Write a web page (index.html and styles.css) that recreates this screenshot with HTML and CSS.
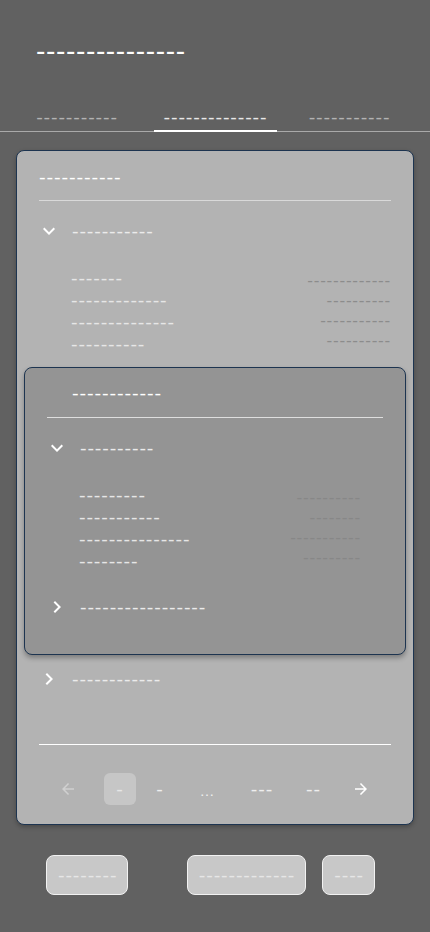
FILE: index.html
```html
<!DOCTYPE html>
<html lang="en">
<head>
  <meta charset="UTF-8">
  <meta name="viewport" content="width=device-width, initial-scale=1.0">
  <title>Report</title>
  <link rel="stylesheet" href="styles.css">
</head>
<body>
  <header class="pageHeader">
    <h1>---------------</h1>
  </header>

  <nav class="tabs">
    <div class="tab">-----------</div>
    <div class="tab active">--------------</div>
    <div class="tab">-----------</div>
  </nav>

  <section class="card">
    <h2 class="cardTitle">-----------</h2>
    <hr class="divider">

    <div class="accordions">
      <!-- expanded group -->
      <div class="accordion">
        <div class="summary">
          <svg class="chevron" viewBox="0 0 24 24"><path d="M16.59 8.59 12 13.17 7.41 8.59 6 10l6 6 6-6z"/></svg>
          <span>-----------</span>
        </div>
        <div class="details">
          <div class="kv">
            <div class="keys">
              <div>-------</div>
              <div>-------------</div>
              <div>--------------</div>
              <div>----------</div>
            </div>
            <div class="values">
              <div>-------------</div>
              <div>----------</div>
              <div>-----------</div>
              <div>----------</div>
            </div>
          </div>

          <section class="card inner">
            <h2 class="cardTitle">------------</h2>
            <hr class="divider">

            <div class="accordions">
              <div class="accordion">
                <div class="summary">
                  <svg class="chevron" viewBox="0 0 24 24"><path d="M16.59 8.59 12 13.17 7.41 8.59 6 10l6 6 6-6z"/></svg>
                  <span>----------</span>
                </div>
                <div class="details">
                  <div class="kv">
                    <div class="keys">
                      <div>---------</div>
                      <div>-----------</div>
                      <div>---------------</div>
                      <div>--------</div>
                    </div>
                    <div class="values">
                      <div>----------</div>
                      <div>--------</div>
                      <div>-----------</div>
                      <div>---------</div>
                    </div>
                  </div>
                </div>
              </div>
              <div class="accordion">
                <div class="summary">
                  <svg class="chevron" viewBox="0 0 24 24"><path d="M10 6 8.59 7.41 13.17 12l-4.58 4.59L10 18l6-6z"/></svg>
                  <span>-----------------</span>
                </div>
              </div>
            </div>
          </section>
        </div>
      </div>

      <div class="accordion">
        <div class="summary">
          <svg class="chevron" viewBox="0 0 24 24"><path d="M10 6 8.59 7.41 13.17 12l-4.58 4.59L10 18l6-6z"/></svg>
          <span>------------</span>
        </div>
      </div>
    </div>

    <hr class="divider bright">

    <div class="pagination">
      <span class="page disabled">
        <svg class="arrow" viewBox="0 0 24 24"><path d="M20 11H7.83l5.59-5.59L12 4l-8 8 8 8 1.41-1.41L7.83 13H20v-2z"/></svg>
      </span>
      <span class="page selected">-</span>
      <span class="page">-</span>
      <span class="page ellipsis">…</span>
      <span class="page">---</span>
      <span class="page">--</span>
      <span class="page">
        <svg class="arrow" viewBox="0 0 24 24"><path d="M12 4l-1.41 1.41L16.17 11H4v2h12.17l-5.58 5.59L12 20l8-8z"/></svg>
      </span>
    </div>
  </section>

  <div class="actions">
    <button class="button">--------</button>
    <div class="actionGroup">
      <button class="button">-------------</button>
      <button class="button">----</button>
    </div>
  </div>
</body>
</html>
```

FILE: styles.css
```css
* {
  box-sizing: border-box;
}

body {
  margin: 0;
  background-color: #616161;
  color: white;
  font-family: "DejaVu Sans", sans-serif;
  font-size: 18.2px;
  letter-spacing: 0.86px;
}

.pageHeader {
  padding: 38px 36px 0;
}

.pageHeader h1 {
  margin: 0;
  font-size: 26px;
  line-height: 26px;
  letter-spacing: 0.6px;
  font-weight: normal;
}

/* Tabs row with underline */
.tabs {
  display: grid;
  grid-template-columns: 154px 123px 145px;
  margin-top: 42px;
  border-bottom: 1px solid #a9a9a9;
}

.tab {
  height: 25px;
  line-height: 22px;
  text-align: center;
  color: #b3b3b3;
}

.tab.active {
  color: #e8e8e8;
  box-shadow: 0 1px 0 #fff, inset 0 -1px 0 #fff;
}

/* Cards */
.card {
  margin: 18px 16px 0;
  padding-bottom: 19px;
  background-color: #b3b3b3;
  border: 1px solid #1d3450;
  border-radius: 8px;
  box-shadow: 0 2px 4px rgba(0, 0, 0, 0.25);
}

.card.inner {
  margin: 11px 7px 0;
  padding-bottom: 23px;
  background-color: #949494;
  box-shadow: 0 3px 5px rgba(0, 0, 0, 0.3);
}

.cardTitle {
  height: 22px;
  margin: 0;
  padding: 0 22px;
  margin-top: 16px;
  font-size: 18.4px;
  line-height: 20px;
  font-weight: normal;
}

.inner .cardTitle {
  margin-top: 15px;
  padding: 0 47px;
}

.divider {
  height: 0;
  margin: 11px 22px 0;
  border: 0;
  border-top: 1px solid #d9d9d9;
}

.inner .divider {
  margin-top: 12px;
  border-top-color: #dedede;
}

.divider.bright {
  margin-top: 41px;
  border-top-color: #fff;
}

/* Accordions */
.accordions {
  padding-top: 6px;
}

.summary {
  display: flex;
  align-items: center;
  gap: 11px;
  height: 48px;
  padding-left: 20px;
  color: #ebebeb;
}

.summary span {
  line-height: 20px;
}

.chevron {
  width: 24px;
  height: 24px;
  flex: none;
  fill: #fff;
}

.details {
  padding-top: 13px;
}

.inner .details {
  padding-bottom: 10px;
}

.kv {
  display: flex;
  justify-content: space-between;
  align-items: center;
  padding: 0 22px 0 54px;
}

.inner .kv {
  padding-right: 44px;
}

.keys div {
  height: 22px;
  line-height: 20px;
  color: #e6e6e6;
}

.values div {
  height: 20px;
  line-height: 18px;
  font-size: 15.8px;
  letter-spacing: 0.74px;
  text-align: right;
  color: #8c8c8c;
}

.inner .values div {
  color: #878787;
}

/* Pagination */
.pagination {
  display: grid;
  grid-template-columns: 60px 32px 36px 46px 52px 39px 44px;
  column-gap: 6px;
  align-items: center;
  justify-items: center;
  height: 32px;
  margin-top: 28px;
  padding-left: 21px;
  color: #eeeeee;
}

.page {
  display: flex;
  align-items: center;
  justify-content: center;
  height: 32px;
  line-height: 30px;
}

.page.selected {
  width: 32px;
  border-radius: 6px;
  background-color: #c6c6c6;
  color: #e6e6e6;
}

.page.ellipsis {
  font-family: "Liberation Sans", sans-serif;
  font-size: 15px;
  letter-spacing: 0;
  padding-top: 4px;
}

.arrow {
  width: 18px;
  height: 18px;
  fill: #fff;
}

.page.disabled .arrow {
  fill: #d0d0d0;
}

/* Bottom buttons */
.actions {
  display: flex;
  justify-content: space-between;
  padding: 30px 55px 0 46px;
}

.actionGroup {
  display: flex;
  gap: 16px;
}

.button {
  height: 40px;
  padding: 0 10px 0 11px;
  border: 1px solid #f2f2f2;
  border-radius: 8px;
  background-color: #c8c8c8;
  color: #e6e6e6;
  font-family: "DejaVu Sans", sans-serif;
  font-size: 18.2px;
  letter-spacing: 0.86px;
  line-height: 36px;
}
```
